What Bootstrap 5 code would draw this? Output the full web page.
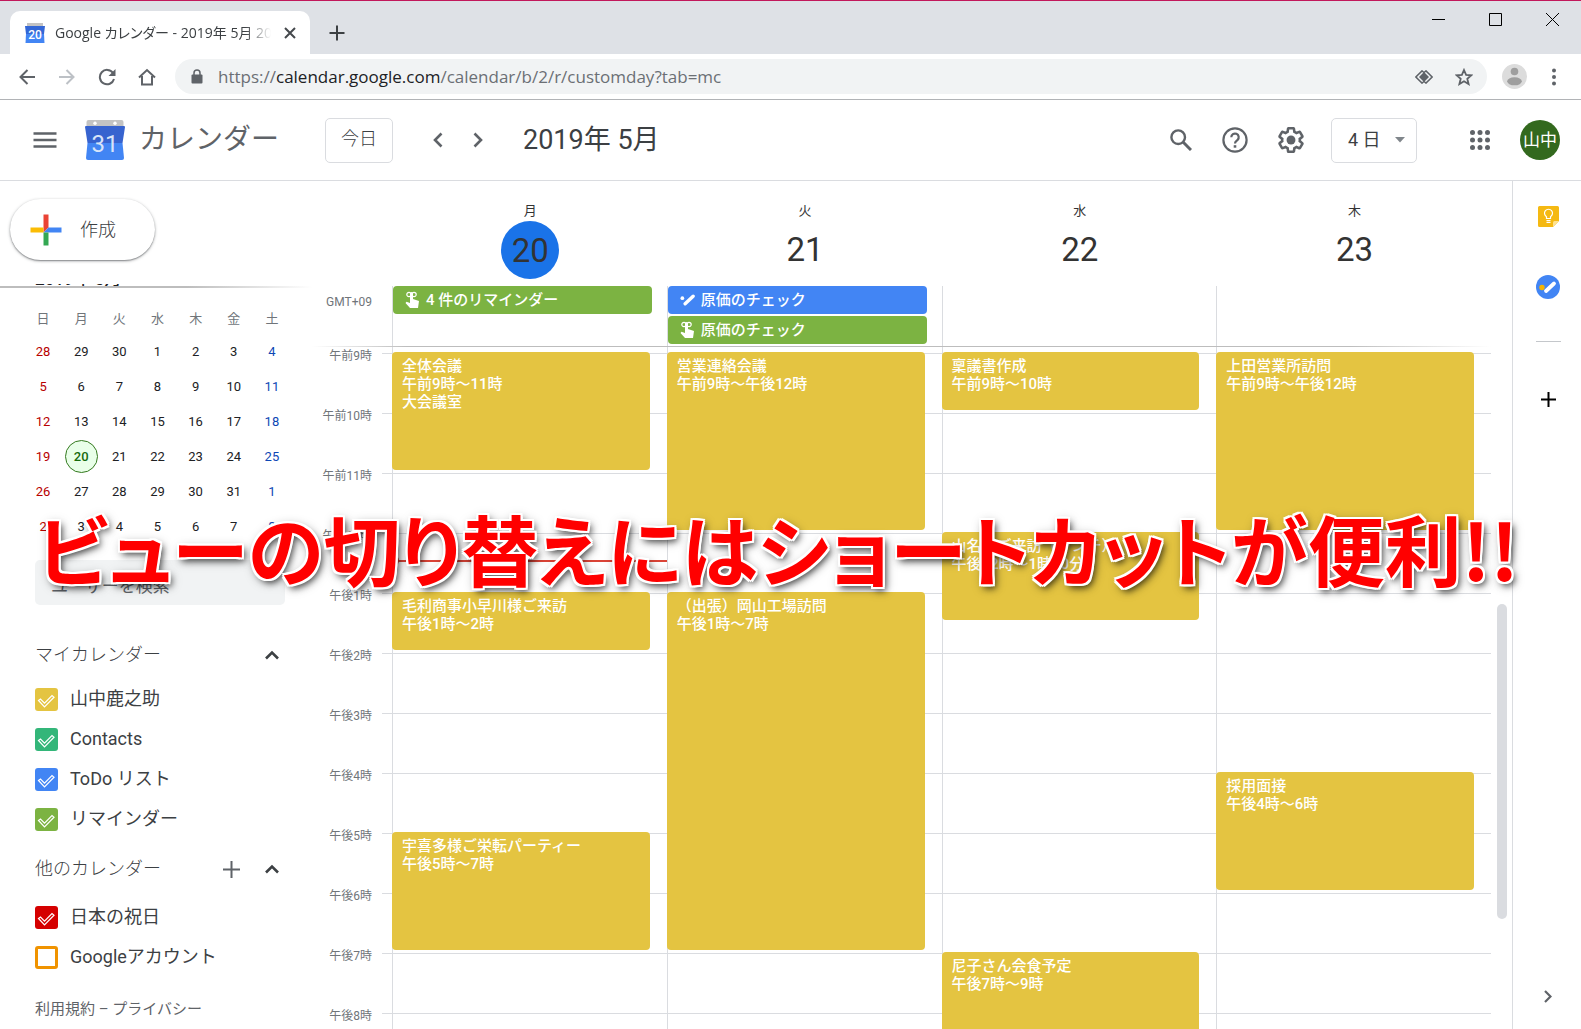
<!DOCTYPE html>
<html lang="ja">
<head>
<meta charset="utf-8">
<meta name="viewport" content="width=device-width, initial-scale=1">
<title>Google カレンダー - 2019年 5月 20日</title>
<link href="https://cdn.jsdelivr.net/npm/bootstrap@5.3.0/dist/css/bootstrap.min.css" rel="stylesheet">
<script src="https://cdn.jsdelivr.net/npm/bootstrap@5.3.0/dist/js/bootstrap.bundle.min.js"></script>
<style>
:root { --line: #dadce0; --ink: #3c4043; --soft: #5f6368; --gold: #e4c441; --green: #7cb342; --blue: #4285f4; }
body { font-family: Roboto, "Noto Sans CJK JP", sans-serif; color: var(--ink); background: #fff; font-size: 18px; line-height: 24px; }
svg { display: block; flex: none; }
button { color: inherit; }
.plain { border: 0; background: none; padding: 0; display: flex; align-items: center; justify-content: center; flex: none; color: var(--soft); }
.ui-font { font-family: "Open Sans", "Noto Sans CJK JP", sans-serif; font-feature-settings: "palt"; }

/* browser frame */
.tabstrip { height: 54px; background: #dee1e6; border-top: 1px solid #c2185b; padding-left: 10px; }
.tab { width: 300px; height: 43px; background: #fff; border-radius: 10px 10px 0 0; padding: 0 12px 0 15px; }
.tab-title { font-size: 14px; margin-left: 10px; width: 216px; -webkit-mask-image: linear-gradient(90deg, #000 88%, transparent); mask-image: linear-gradient(90deg, #000 88%, transparent); }
.tab-new { width: 54px; height: 43px; }
.winbtn { width: 57px; height: 37px; color: #000; }
.toolbar { height: 46px; border-bottom: 1px solid #b1b3b6; padding: 0 7px; }
.w40 { width: 40px; height: 40px; }
.omnibox { height: 35px; border-radius: 18px; background: #f1f3f4; margin: 0 7px 0 8px; padding: 0 3px 0 16px; }
.url { font-size: 17px; color: #6b6f74; margin-left: 15px; }
.url b { font-weight: 400; color: #202124; }

/* app header */
.apphead { height: 81px; border-bottom: 1px solid var(--line); padding: 0 21px 0 33px; }
.brand { width: 240px; margin-left: 28px; gap: 14px; color: var(--soft); font-size: 28px; font-weight: 400; }
.boxed { height: 45px; border: 1px solid var(--line); border-radius: 5px; background: #fff; }
.today-btn { width: 68px; font-size: 18px; font-weight: 300; padding: 0 0 2px; }
.pager { margin: 0 25px; }
.month-title { font-size: 27px; line-height: 32px; font-weight: 400; margin: 0; }
.w54 { width: 54px; height: 40px; }
.w58 { width: 58px; height: 40px; }
.view-select { width: 86px; margin: 0 43px 0 11px; padding: 0 0 1px 16px; font-size: 18px; color: var(--ink); appearance: none; background: #fff url("data:image/svg+xml,%3Csvg xmlns='http://www.w3.org/2000/svg' width='10' height='6'%3E%3Cpath d='M0 0h10L5 5.500z' fill='%2380868b'/%3E%3C/svg%3E") no-repeat right 11px center; }
.avatar { width: 40px; height: 40px; border-radius: 50%; background: #33691e; color: #fff; font-size: 17px; margin-left: 20px; text-decoration: none; }

/* sidebar */
.sidebar { width: 312px; flex: none; }
.create-zone { height: 103px; padding: 18px 10px; }
.create-btn { width: 145px; height: 61px; border: 0; border-radius: 31px; background: #fff; box-shadow: 0 1px 3px rgba(60,64,67,.5), 0 1px 1px rgba(60,64,67,.3); padding: 0 0 0 20px; gap: 18px; font-size: 18px; font-weight: 300; }
.fade-rule { height: 2px; background: linear-gradient(90deg, #bdbdbd 60%, transparent); }
.side-scroll { padding: 0 0 0 35px; }
.mini-month { font-size: 17px; line-height: 13px; margin: -11px 0 0; color: #202124; font-weight: 500; }
.mini-cal { width: 267px; table-layout: fixed; margin: 15px 0 0 -11px; font-size: 13px; text-align: center; font-weight: 400; color: #202124; border-collapse: collapse; }
.mini-cal td, .mini-cal th { padding: 0; height: 35px; vertical-align: middle; line-height: 20px; }
.mini-cal th { color: #70757a; font-weight: 400; height: 31px; font-size: 13px; }
.mini-cal td:first-child { color: #b80000; }
.mini-cal td:last-child { color: #0d47b5; }
.now-day { display: block; width: 33px; height: 33px; line-height: 31px; margin: 0 auto; border: 1px solid #33791e; border-radius: 50%; background: #e9ffe9; color: #176a0d; font-weight: 500; }
.people { width: 250px; height: 45px; background: #f1f3f4; border: 0; border-radius: 5px; font-size: 17px; padding: 7px 16px 0; margin-top: 16px; display: block; }
.people::placeholder { color: #5f6368; opacity: 1; }
.side-head { font-size: 18px; font-weight: 300; line-height: 24px; margin: 0; }
.side-row { width: 249px; height: 40px; margin-top: 30px; }
.side-row.later { margin-top: 10px; }
.cal-item { height: 40px; gap: 12px; margin: 0; }
.cal-item input { appearance: none; width: 23px; height: 23px; margin: 0; flex: none; border-radius: 3px; border: 3px solid var(--c); }
.cal-item input:checked { border: 0; background: var(--c) url("data:image/svg+xml,%3Csvg xmlns='http://www.w3.org/2000/svg' width='23' height='23' fill='none' stroke='%23fff' stroke-width='1.200'%3E%3Cpath d='M3.500 12.500 5.500 11 9.500 15.200 17 7.500 19 9.200 9.500 19z'/%3E%3C/svg%3E"); }
.c-gold { --c: var(--gold); } .c-teal { --c: #33b679; } .c-blue { --c: var(--blue); } .c-green { --c: var(--green); } .c-red { --c: #d50000; } .c-orange { --c: #f09300; }
.legal { font-size: 15px; color: var(--soft); margin-top: 20px; }
.legal a { color: inherit; text-decoration: none; }

/* calendar */
.gutter { width: 80px; flex: none; font-size: 12px; color: #70757a; text-align: right; }
.gutter.zone { padding-top: 7px; }
.rail-space { width: 21px; flex: none; }
.day-head { height: 105px; padding: 20px 0 0 2px; text-align: center; color: #333; }
.day-name { font-size: 13px; line-height: 20px; font-weight: 400; }
.day-num { font-size: 33px; line-height: 58px; }
.day-num.is-today { width: 58px; height: 58px; line-height: 60px; border-radius: 50%; background: #1a73e8; margin: 0 auto; }
.allday { height: 60px; border-left: 1px solid var(--line); gap: 2px; padding-right: 15px; }
.chip { height: 28px; border: 0; border-radius: 4px; background: var(--c); color: #fff; font-size: 15px; font-weight: 500; text-align: left; padding: 0 0 1px 12px; gap: 6px; }
.divide { height: 1px; background: linear-gradient(90deg, transparent, #bdbdbd 8%, #bdbdbd 88%, transparent); }
.ruled { background-image: linear-gradient(var(--line) 1px, transparent 1px); background-size: 100% 60px; background-position: 0 6px; }
.hour-labels { width: 60px; line-height: 18px; }
.hour-labels div { height: 60px; }
.tick { width: 10px; margin-left: 10px; }
.day-col { display: grid; grid-auto-rows: 30px; grid-template-columns: 100%; border-left: 1px solid var(--line); padding-top: 5px; }
.ev { grid-column: 1; margin: 0 17px 2px -1px; background: var(--gold); border: 0; border-radius: 4px; color: #fff; font-size: 15px; font-weight: 500; line-height: 18px; padding: 5px 10px; text-align: left; display: flex; flex-direction: column; justify-content: flex-start; overflow: hidden; white-space: nowrap; }
.r-9 { grid-row-start: 1; } .r-12 { grid-row-start: 7; } .r-13 { grid-row-start: 9; } .r-16 { grid-row-start: 15; } .r-17 { grid-row-start: 17; } .r-19 { grid-row-start: 21; }
.s-2 { grid-row-end: span 2; } .s-3 { grid-row-end: span 3; } .s-4 { grid-row-end: span 4; } .s-6 { grid-row-end: span 6; } .s-12 { grid-row-end: span 12; }
.now-line { grid-column: 1; grid-row: 7 / span 2; height: 2px; margin-top: 28px; background: #db4437; position: relative; }
.now-line::before { content: ""; position: absolute; left: -7px; top: -6px; width: 13px; height: 13px; border-radius: 50%; background: #db4437; }
.thumb { width: 10px; height: 315px; margin: 423px 0 0 6px; border-radius: 5px; background: var(--line); }
.rail { width: 69px; flex: none; border-left: 1px solid var(--line); padding: 23px 0 20px 2px; }
.rail hr { width: 25px; margin: 42px 0 0; border-top: 1px solid #c4c7cb; opacity: 1; }
.rail .plain { width: 25px; height: 25px; }
.rail .after { margin-top: 45px; }

/* caption across the window */
.headline { position: absolute; left: 0; right: 0; top: 49%; margin: 0; padding-left: 37px; font-family: "Noto Sans CJK JP", sans-serif; font-weight: 700; font-size: 77px; line-height: 88px; white-space: nowrap; color: #f00; font-feature-settings: "palt"; pointer-events: none;
  text-shadow: 2px 0 #fff, -2px 0 #fff, 0 2px #fff, 0 -2px #fff, 2px 2px #fff, -2px 2px #fff, 2px -2px #fff, -2px -2px #fff, 3px 4px 6px rgba(0,0,0,.6), 2px 3px 12px rgba(0,0,0,.4); }
</style>
</head>
<body class="vh-100 overflow-hidden d-flex flex-column position-relative">

<div class="tabstrip d-flex align-items-end flex-shrink-0">
  <div class="tab d-flex align-items-center">
    <svg width="20" height="20" viewBox="0 0 40 40"><path d="M4 0h32v8H4z" fill="#c3c3c3"/><path d="M0 6h40l-2 16H2z" fill="#3367d6"/><path d="M2 22h36l1 18H1z" fill="#4285f4"/><text x="20" y="31" font-size="24" font-weight="500" text-anchor="middle" fill="#fff" font-family="Roboto">20</text></svg>
    <span class="tab-title ui-font text-nowrap overflow-hidden">Google カレンダー - 2019年 5月 20日</span>
    <button class="plain ms-auto" aria-label="タブを閉じる"><svg width="16" height="16" viewBox="0 0 16 16" stroke="#45494d" stroke-width="2"><path d="M3 3l10 10M13 3 3 13"/></svg></button>
  </div>
  <button class="plain tab-new" aria-label="新しいタブ"><svg width="16" height="16" stroke="#3c4043" stroke-width="2"><path d="M8 .5v15M.5 8h15"/></svg></button>
  <div class="d-flex ms-auto align-self-start">
    <button class="plain winbtn" aria-label="最小化"><svg width="13" height="13" stroke="#000"><path d="M0 6.500h13"/></svg></button>
    <button class="plain winbtn" aria-label="最大化"><svg width="13" height="13" stroke="#000" fill="none"><path d="M.5.5h12v12H.5z"/></svg></button>
    <button class="plain winbtn" aria-label="閉じる"><svg width="13" height="13" stroke="#000" fill="none"><path d="M0 0l13 13M13 0 0 13"/></svg></button>
  </div>
</div>

<div class="toolbar d-flex align-items-center flex-shrink-0">
  <button class="plain w40" aria-label="戻る"><svg width="16" height="16" fill="none" stroke="#5f6368" stroke-width="2"><path d="M16 8H1.500M8.500 1 1.500 8l7 7"/></svg></button>
  <button class="plain w40" aria-label="進む"><svg width="16" height="16" fill="none" stroke="#bdc1c6" stroke-width="2"><path d="M0 8h14.500M7.500 1l7 7-7 7"/></svg></button>
  <button class="plain w40" aria-label="再読み込み"><svg width="18" height="18" fill="none" stroke="#5f6368" stroke-width="2"><path d="M15 5A7.200 7.200 0 1 0 16 11"/><path d="M17.500 1v7h-7z" fill="#5f6368" stroke="none"/></svg></button>
  <button class="plain w40" aria-label="ホーム"><svg width="18" height="18" fill="none" stroke="#5f6368" stroke-width="2"><path d="M1 9.500 9 2l8 7.500M4 8v8.500h10V8"/></svg></button>
  <div class="omnibox d-flex align-items-center flex-grow-1">
    <svg width="12" height="15" viewBox="0 0 12 15"><rect x=".5" y="5.500" width="11" height="9" rx="1" fill="#5f6368"/><path d="M3 6V4a3 3 0 0 1 6 0v2" fill="none" stroke="#5f6368" stroke-width="1.500"/></svg>
    <span class="url ui-font">https://<b>calendar.google.com</b>/calendar/b/2/r/customday?tab=mc</span>
    <button class="plain w40 ms-auto" aria-label="ハンドラ"><svg width="18" height="14" viewBox="0 0 18 14" fill="none" stroke="#5f6368" stroke-width="1.500"><path d="M9 2.500 7 .9.900 7l6.100 6.100 2-1.600M9 2.500 11 .9 17.100 7 11 13.100l-2-1.600"/><path d="M9 2 14 7 9 12 4 7z" fill="#5f6368" stroke="none"/></svg></button>
    <button class="plain w40" aria-label="ブックマーク"><svg width="18" height="18" viewBox="0 0 18 18" fill="none" stroke="#5f6368" stroke-width="1.800"><path d="M9 2l2.100 4.900 5.200.4-4 3.500 1.300 5.200L9 13.200 4.400 16l1.300-5.200-4-3.500 5.200-.4z"/></svg></button>
  </div>
  <button class="plain w40" aria-label="プロフィール"><svg width="25" height="25"><circle cx="12.500" cy="12.500" r="12.500" fill="#dcdcdc"/><circle cx="12.500" cy="7.500" r="3.800" fill="#9e9e9e"/><ellipse cx="12.500" cy="17.300" rx="7.300" ry="4" fill="#9e9e9e"/></svg></button>
  <button class="plain w40" aria-label="メニュー"><svg width="4" height="18" fill="#5f6368"><circle cx="2" cy="2.500" r="2"/><circle cx="2" cy="9" r="2"/><circle cx="2" cy="15.500" r="2"/></svg></button>
</div>

<header class="apphead d-flex align-items-center flex-shrink-0">
  <button class="plain" aria-label="メインメニュー"><svg width="24" height="16" stroke="#5f6368" stroke-width="2.400"><path d="M.5 1.500h23M.5 8h23M.5 14.500h23"/></svg></button>
  <div class="brand d-flex align-items-center">
    <svg width="40" height="40" viewBox="0 0 40 40"><path d="M3.500 0h33a2 2 0 0 1 2 2v6h-37V2a2 2 0 0 1 2-2z" fill="#c3c3c3"/><circle cx="10" cy="3.300" r="1.700" fill="#fff"/><circle cx="30" cy="3.300" r="1.700" fill="#fff"/><path d="M1 6h38a1 1 0 0 1 1 1l-2.500 16h-35L0 7a1 1 0 0 1 1-1z" fill="#3763cf"/><path d="M2.500 23h35L39 38a2 2 0 0 1-2 2H3a2 2 0 0 1-2-2z" fill="#4285f4"/><text x="20" y="32" font-size="24" font-weight="400" text-anchor="middle" fill="#d9e4f8" font-family="Roboto">31</text></svg>
    <span>カレンダー</span>
  </div>
  <button class="boxed today-btn">今日</button>
  <div class="pager d-flex">
    <button class="plain w40" aria-label="前の期間"><svg width="10" height="16" fill="none" stroke="#5f6368" stroke-width="2.600"><path d="M8.500 1.500 2 8l6.500 6.500"/></svg></button>
    <button class="plain w40" aria-label="次の期間"><svg width="10" height="16" fill="none" stroke="#5f6368" stroke-width="2.600"><path d="M1.500 1.500 8 8l-6.500 6.500"/></svg></button>
  </div>
  <h1 class="month-title">2019年 5月</h1>
  <button class="plain w54 ms-auto" aria-label="検索"><svg width="22" height="22" fill="none" stroke="#5f6368"><circle cx="8.200" cy="8.200" r="6.800" stroke-width="2.400"/><path d="M13 13l8 8" stroke-width="3"/></svg></button>
  <button class="plain w54" aria-label="ヘルプ"><svg width="26" height="26" fill="none" stroke="#5f6368" stroke-width="2.200"><circle cx="13" cy="13" r="11.600"/><path d="M9.300 10.300a3.700 3.700 0 1 1 6.300 2.600c-1.300 1.200-2.600 1.800-2.600 3.600"/><path d="M13 18.200v2.500" stroke-width="2.600"/></svg></button>
  <button class="plain w58" aria-label="設定"><svg width="28" height="28" viewBox="1 1 22 22" fill="#5f6368"><path d="M13.850 22.250h-3.700c-.74 0-1.360-.54-1.450-1.270l-.27-1.890c-.27-.14-.53-.29-.79-.46l-1.800.72c-.7.260-1.470-.030-1.810-.650L2.200 15.530c-.35-.66-.20-1.440.36-1.880l1.530-1.190c-.010-.15-.020-.30-.020-.46 0-.15.010-.31.020-.46l-1.520-1.190c-.59-.45-.74-1.260-.37-1.880l1.850-3.190c.34-.62 1.110-.9 1.790-.63l1.810.73c.26-.17.52-.32.78-.46l.27-1.910c.09-.7.710-1.250 1.440-1.250h3.700c.74 0 1.360.54 1.450 1.270l.27 1.890c.27.14.53.29.79.46l1.800-.72c.71-.26 1.480.03 1.820.65l1.840 3.180c.36.66.20 1.440-.36 1.880l-1.520 1.190c.010.15.020.30.020.46s-.010.31-.020.46l1.520 1.190c.56.45.72 1.230.37 1.860l-1.860 3.220c-.34.62-1.110.9-1.800.63l-1.800-.72c-.26.17-.52.32-.78.46l-.27 1.910c-.1.680-.72 1.220-1.460 1.220zm-3.230-2h2.760l.37-2.550.53-.22c.44-.18.88-.44 1.340-.78l.45-.34 2.380.96 1.380-2.400-2.030-1.580.07-.56c.030-.26.060-.51.060-.78s-.030-.53-.060-.78l-.070-.56 2.030-1.580-1.390-2.400-2.390.96-.45-.35c-.42-.32-.87-.58-1.330-.77l-.52-.22-.37-2.550h-2.760l-.37 2.550-.53.21c-.44.190-.88.440-1.340.79l-.45.330-2.380-.95-1.390 2.390 2.030 1.580-.070.56a7 7 0 0 0-.060.79c0 .26.020.53.060.78l.070.56-2.030 1.580 1.380 2.400 2.390-.96.45.35c.43.330.86.580 1.330.77l.53.220z"/><circle cx="12" cy="12" r="3.500"/></svg></button>
  <select class="boxed view-select" aria-label="表示形式"><option>4 日</option><option>週</option><option>月</option></select>
  <button class="plain w40" aria-label="Google アプリ"><svg width="20" height="20" fill="#5f6368"><circle cx="2.500" cy="2.500" r="2.500"/><circle cx="10" cy="2.500" r="2.500"/><circle cx="17.500" cy="2.500" r="2.500"/><circle cx="2.500" cy="10" r="2.500"/><circle cx="10" cy="10" r="2.500"/><circle cx="17.500" cy="10" r="2.500"/><circle cx="2.500" cy="17.500" r="2.500"/><circle cx="10" cy="17.500" r="2.500"/><circle cx="17.500" cy="17.500" r="2.500"/></svg></button>
  <a href="#" class="avatar d-flex align-items-center justify-content-center flex-shrink-0">山中</a>
</header>

<div class="d-flex flex-grow-1 overflow-hidden">
  <aside class="sidebar">
    <div class="create-zone">
      <button class="create-btn d-flex align-items-center"><svg width="32" height="32"><path d="M13.500.5h5v13l-5 5z" fill="#ea4335"/><path d="M.5 13.500h13v5H.5z" fill="#fbbc04"/><path d="M18.500 13.500h13v5h-18z" fill="#4285f4"/><path d="M13.500 18.500h5v13h-5z" fill="#34a853"/></svg>作成</button>
    </div>
    <div class="side-scroll overflow-hidden">
      <h2 class="mini-month">2019年 5月</h2>
    </div>
    <div class="fade-rule"></div>
    <div class="side-scroll">
      <table class="mini-cal">
        <thead><tr><th>日</th><th>月</th><th>火</th><th>水</th><th>木</th><th>金</th><th>土</th></tr></thead>
        <tbody>
          <tr><td>28</td><td>29</td><td>30</td><td>1</td><td>2</td><td>3</td><td>4</td></tr>
          <tr><td>5</td><td>6</td><td>7</td><td>8</td><td>9</td><td>10</td><td>11</td></tr>
          <tr><td>12</td><td>13</td><td>14</td><td>15</td><td>16</td><td>17</td><td>18</td></tr>
          <tr><td>19</td><td><span class="now-day">20</span></td><td>21</td><td>22</td><td>23</td><td>24</td><td>25</td></tr>
          <tr><td>26</td><td>27</td><td>28</td><td>29</td><td>30</td><td>31</td><td>1</td></tr>
          <tr><td>2</td><td>3</td><td>4</td><td>5</td><td>6</td><td>7</td><td>8</td></tr>
        </tbody>
      </table>
      <input class="people" type="text" placeholder="ユーザーを検索" aria-label="ユーザーを検索">
      <div class="side-row d-flex align-items-center">
        <h3 class="side-head">マイカレンダー</h3>
        <button class="plain ms-auto me-1" aria-label="折りたたむ"><svg width="16" height="10" fill="none" stroke="#3c4043" stroke-width="2.600"><path d="M2 8.500l6-6 6 6"/></svg></button>
      </div>
      <div class="mt-1">
      <label class="cal-item d-flex align-items-center c-gold"><input type="checkbox" checked>山中鹿之助</label>
      <label class="cal-item d-flex align-items-center c-teal"><input type="checkbox" checked>Contacts</label>
      <label class="cal-item d-flex align-items-center c-blue"><input type="checkbox" checked>ToDo リスト</label>
      <label class="cal-item d-flex align-items-center c-green"><input type="checkbox" checked>リマインダー</label>
      </div>
      <div class="side-row later d-flex align-items-center">
        <h3 class="side-head">他のカレンダー</h3>
        <button class="plain ms-auto" aria-label="追加"><svg width="17" height="17" stroke="#5f6368" stroke-width="2"><path d="M8.500 0v17M0 8.500h17"/></svg></button>
        <button class="plain ms-4 me-1" aria-label="折りたたむ"><svg width="16" height="10" fill="none" stroke="#3c4043" stroke-width="2.600"><path d="M2 8.500l6-6 6 6"/></svg></button>
      </div>
      <div class="mt-2">
      <label class="cal-item d-flex align-items-center c-red"><input type="checkbox" checked>日本の祝日</label>
      <label class="cal-item d-flex align-items-center c-orange"><input type="checkbox">Googleアカウント</label>
      </div>
      <div class="legal"><a href="#">利用規約</a> – <a href="#">プライバシー</a></div>
    </div>
  </aside>

  <main class="flex-grow-1 d-flex overflow-hidden">
    <div class="flex-grow-1 d-flex flex-column">
      <div class="d-flex">
        <div class="gutter"></div>
        <div class="row g-0 flex-grow-1">
          <div class="col day-head"><div class="day-name">月</div><div class="day-num is-today">20</div></div>
          <div class="col day-head"><div class="day-name">火</div><div class="day-num">21</div></div>
          <div class="col day-head"><div class="day-name">水</div><div class="day-num">22</div></div>
          <div class="col day-head"><div class="day-name">木</div><div class="day-num">23</div></div>
        </div>
      </div>
      <div class="d-flex">
        <div class="gutter zone"><div class="hour-labels">GMT+09</div></div>
        <div class="row g-0 flex-grow-1">
          <div class="col allday d-flex flex-column">
            <button class="chip c-green d-flex align-items-center"><svg width="15" height="17" viewBox="0 0 15 17"><circle cx="4" cy="3.500" r="2.200" fill="none" stroke="#fff" stroke-width="1.200"/><circle cx="9" cy="3.500" r="2.200" fill="none" stroke="#fff" stroke-width="1.200"/><path d="M5 2.500a1.500 1.500 0 0 1 3 0V8l6 2-1 7H5L.5 12l1-1.200L5 12z" fill="#fff"/></svg>4 件のリマインダー</button>
          </div>
          <div class="col allday d-flex flex-column">
            <button class="chip c-blue d-flex align-items-center"><svg width="15" height="14" viewBox="0 0 16 14"><circle cx="2.500" cy="5" r="2" fill="#fff"/><path d="M5.500 11 14 3" stroke="#fff" stroke-width="3.600" stroke-linecap="round"/></svg>原価のチェック</button>
            <button class="chip c-green d-flex align-items-center"><svg width="15" height="17" viewBox="0 0 15 17"><circle cx="4" cy="3.500" r="2.200" fill="none" stroke="#fff" stroke-width="1.200"/><circle cx="9" cy="3.500" r="2.200" fill="none" stroke="#fff" stroke-width="1.200"/><path d="M5 2.500a1.500 1.500 0 0 1 3 0V8l6 2-1 7H5L.5 12l1-1.200L5 12z" fill="#fff"/></svg>原価のチェック</button>
          </div>
          <div class="col allday"></div>
          <div class="col allday"></div>
        </div>
      </div>
      <div class="divide"></div>
      <div class="d-flex flex-grow-1 overflow-hidden">
        <div class="gutter d-flex">
          <div class="hour-labels">
            <div>午前9時</div><div>午前10時</div><div>午前11時</div><div>午後12時</div><div>午後1時</div><div>午後2時</div><div>午後3時</div><div>午後4時</div><div>午後5時</div><div>午後6時</div><div>午後7時</div><div>午後8時</div>
          </div>
          <div class="tick ruled"></div>
        </div>
        <div class="row g-0 flex-grow-1 ruled">
          <div class="col day-col">
            <button class="ev r-9 s-4"><span>全体会議</span><span>午前9時〜11時</span><span>大会議室</span></button>
            <div class="now-line"></div>
            <button class="ev r-13 s-2"><span>毛利商事小早川様ご来訪</span><span>午後1時〜2時</span></button>
            <button class="ev r-17 s-4"><span>宇喜多様ご栄転パーティー</span><span>午後5時〜7時</span></button>
          </div>
          <div class="col day-col">
            <button class="ev r-9 s-6"><span>営業連絡会議</span><span>午前9時〜午後12時</span></button>
            <button class="ev r-13 s-12"><span>（出張）岡山工場訪問</span><span>午後1時〜7時</span></button>
          </div>
          <div class="col day-col">
            <button class="ev r-9 s-2"><span>稟議書作成</span><span>午前9時〜10時</span></button>
            <button class="ev r-12 s-3"><span>山名様ご来訪（ランチ）</span><span>午後12時〜1時30分</span></button>
            <button class="ev r-19 s-4"><span>尼子さん会食予定</span><span>午後7時〜9時</span></button>
          </div>
          <div class="col day-col">
            <button class="ev r-9 s-6"><span>上田営業所訪問</span><span>午前9時〜午後12時</span></button>
            <button class="ev r-16 s-4"><span>採用面接</span><span>午後4時〜6時</span></button>
          </div>
        </div>
      </div>
    </div>
    <div class="rail-space"><div class="d-flex"><div class="thumb"></div></div></div>
  </main>

  <nav class="rail d-flex flex-column align-items-center">
    <button class="plain" aria-label="Keep"><svg width="21" height="21"><path d="M1.500 0h18A1.500 1.500 0 0 1 21 1.500V15l-6 6H1.500A1.500 1.500 0 0 1 0 19.500v-18A1.500 1.500 0 0 1 1.500 0z" fill="#f5b912"/><path d="M21 15h-4.500a1.500 1.500 0 0 0-1.500 1.500V21z" fill="#fde293"/><path d="M8.500 12.500v-1.800a4 4 0 1 1 4 0v1.800zM8.500 14.500h4M8.500 16.300h4" fill="none" stroke="#fff" stroke-width="1.200"/></svg></button>
    <button class="plain after" aria-label="ToDo リスト"><svg width="24" height="24"><circle cx="12" cy="12" r="12" fill="#4285f4"/><circle cx="6" cy="12.500" r="2.700" fill="#f5b400"/><path d="M10 16 18 8.500" stroke="#fff" stroke-width="3.800" stroke-linecap="round"/></svg></button>
    <hr>
    <button class="plain after" aria-label="アドオンを取得"><svg width="15" height="15" stroke="#000" stroke-width="2"><path d="M7.500 0v15M0 7.500h15"/></svg></button>
    <button class="plain mt-auto" aria-label="サイドパネルを非表示"><svg width="8" height="13" fill="none" stroke="#5f6368" stroke-width="2.200"><path d="M1 1l5.500 5.500L1 12"/></svg></button>
  </nav>
</div>

<p class="headline">ビューの切り替えにはショートカットが便利!!</p>
</body>
</html>
